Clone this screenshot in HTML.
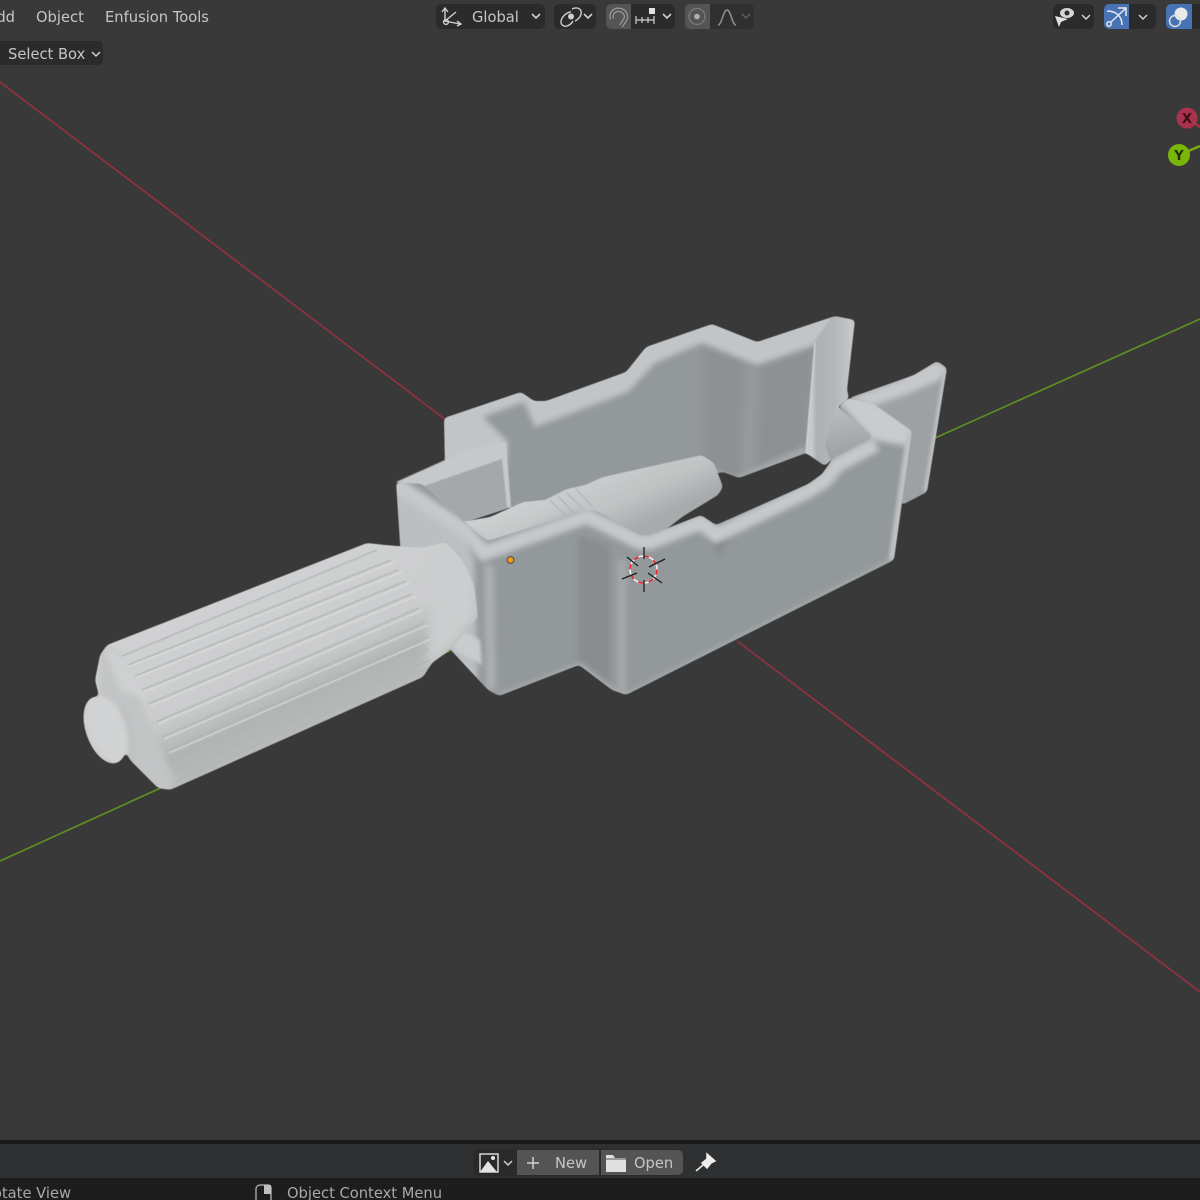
<!DOCTYPE html>
<html><head><meta charset="utf-8"><title>Viewport</title>
<style>html,body{margin:0;padding:0;background:#393939;width:1200px;height:1200px;overflow:hidden}svg{display:block;filter:blur(.35px)}text{font-family:"DejaVu Sans","Liberation Sans",sans-serif;font-size:14.7px;fill:#c6c6c6}</style></head><body>
<svg width="1200" height="1200" viewBox="0 0 1200 1200" xmlns="http://www.w3.org/2000/svg">
<defs>
<filter id="rd" filterUnits="userSpaceOnUse" x="0" y="0" width="1200" height="1200"><feGaussianBlur stdDeviation="2"/><feComponentTransfer><feFuncA type="linear" slope="4" intercept="-1.5"/></feComponentTransfer></filter>
<filter id="b1" filterUnits="userSpaceOnUse" x="0" y="0" width="1200" height="1200"><feGaussianBlur stdDeviation="1.5"/></filter>
<filter id="b3" filterUnits="userSpaceOnUse" x="0" y="0" width="1200" height="1200"><feGaussianBlur stdDeviation="3"/></filter>
<filter id="b5" filterUnits="userSpaceOnUse" x="0" y="0" width="1200" height="1200"><feGaussianBlur stdDeviation="5"/></filter>
<filter id="s" filterUnits="userSpaceOnUse" x="0" y="0" width="1200" height="1200"><feGaussianBlur stdDeviation="0.5"/></filter>
<mask id="cBack" maskUnits="userSpaceOnUse" x="0" y="0" width="1200" height="1200"><path filter="url(#rd)" fill="#fff" d="M444 418L521 392L534 401L546 401L626 372L646 347L712 324L757 342L835 316L855 320L847 390L849 398L838 407L833 458L825 466L806 453L739 478L723 472L510 520L505 462L470 458L445 470Z"/></mask>
<mask id="cFront" maskUnits="userSpaceOnUse" x="0" y="0" width="1200" height="1200"><path filter="url(#rd)" fill="#fff" d="M396 482L422 484L465 522L487 541L587 510L597 511L640 535L650 535L701 515L716 525L808 484L822 474L833 458L873 437L838 407L848 398L873 403L912 431L894 560L626 695L612 690L579 665L499 696L488 690L448 647L403 590Z"/></mask>
<mask id="cTab" maskUnits="userSpaceOnUse" x="0" y="0" width="1200" height="1200"><path filter="url(#rd)" fill="#fff" d="M849 398L914 375L937 361L947 368L927 492L902 505L880 470Z"/></mask>
<mask id="cNoz" maskUnits="userSpaceOnUse" x="0" y="0" width="1200" height="1200"><path filter="url(#rd)" fill="#fff" d="M455 523L490 517L523 502L545 500L567 489L585 485L603 477L702 455L714 463L723 487L718 495L682 517L640 550L480 570Z"/></mask>
<mask id="cKnob" maskUnits="userSpaceOnUse" x="0" y="0" width="1200" height="1200"><g filter="url(#rd)" fill="#fff"><path d="M367 543L385 545L423 548L445 542L462 560L474 585L478 617L450 650L432 663L423 677L170 790L158 788L130 760L100 700L95 680L100 655L107 645Z"/><ellipse cx="105" cy="730" rx="19" ry="35" transform="rotate(-20 105 730)"/></g></mask>
<linearGradient id="gk" gradientUnits="userSpaceOnUse" x1="235" y1="590" x2="300" y2="735"><stop offset="0" stop-color="#d0d1d2"/><stop offset=".55" stop-color="#cbcccd"/><stop offset=".8" stop-color="#b1b4b4"/><stop offset="1" stop-color="#b9bbbb"/></linearGradient>
<linearGradient id="gn" gradientUnits="userSpaceOnUse" x1="590" y1="470" x2="620" y2="535"><stop offset="0" stop-color="#cdcfd0"/><stop offset=".6" stop-color="#bfc1c2"/><stop offset="1" stop-color="#a8abac"/></linearGradient>
<linearGradient id="gp" gradientUnits="userSpaceOnUse" x1="812" y1="380" x2="850" y2="380"><stop offset="0" stop-color="#c6c8ca"/><stop offset=".12" stop-color="#aeb1b3"/><stop offset=".6" stop-color="#b4b7b9"/><stop offset="1" stop-color="#c4c6c8"/></linearGradient>
<linearGradient id="gw" gradientUnits="userSpaceOnUse" x1="845" y1="410" x2="850" y2="450"><stop offset="0" stop-color="#b8bbbd"/><stop offset="1" stop-color="#a0a4a6"/></linearGradient>
</defs>
<rect width="1200" height="1200" fill="#393939"/>
<g fill="none" stroke-width="1.7">
<path d="M0 82L446 420M737 641L1200 992" stroke="#90323f"/>
<path d="M0 861L165 786M435 658L455 648M935 438L1200 319" stroke="#608e22"/>
</g>
<!-- right tab -->
<g mask="url(#cTab)"><rect x="840" y="350" width="120" height="170" fill="#9da1a3"/>
<path d="M849 398L900 380L914 370L937 361L950 368L938 381L905 395L873 406Z" fill="#c6c8ca" filter="url(#b3)"/>
<path d="M946 370L926 492" stroke="#c0c3c4" stroke-width="5" fill="none" filter="url(#b1)"/></g>
<!-- back wall -->
<g mask="url(#cBack)"><rect x="440" y="310" width="420" height="240" fill="#93989a"/>
<path d="M703 340L703 470L735 482L806 450L815 345L760 365Z" fill="#8d9193" filter="url(#b5)"/>
<path d="M752 365L748 475" stroke="#999c9e" stroke-width="12" filter="url(#b5)" fill="none"/>
<path d="M703 470L735 482L806 450" stroke="#a8abad" stroke-width="7" fill="none" filter="url(#b3)"/>
<path d="M436 410L521 385L535 395L546 395L626 365L646 340L712 318L757 336L840 310L815 345L757 365L702 343L655 363L628 392L535 427L524 402L483 417L508 442L505 470L470 470L440 480Z" fill="#c2c5c7" filter="url(#b3)"/>
<path d="M815 343L806 453L825 468L835 458L840 407L852 398L860 315L835 312Z" fill="url(#gp)"/>
<path d="M815 343L806 453" stroke="#d0d2d3" stroke-width="1.5" filter="url(#s)"/>
</g>
<!-- left section rim and inner wall -->
<path d="M396 482L445 460L470 449L506 442L511 507L465 522L422 490Z" fill="#c6c8ca" filter="url(#s)"/>
<path d="M424 486L502 459L507 508L465 522Z" fill="#a4a8aa" filter="url(#s)"/>
<!-- far right inner -->
<path d="M836 405L882 440L833 468L825 445Z" fill="url(#gw)" filter="url(#s)"/>
<!-- nozzle -->
<g mask="url(#cNoz)"><rect x="450" y="450" width="280" height="130" fill="url(#gn)"/>
<path d="M460 530L495 548L575 512L640 545L725 500L730 570L470 570Z" fill="#aaadaf" filter="url(#b5)"/>
<g stroke="#aeb1b2" stroke-width="1.2" filter="url(#s)"><path d="M550 500L566 516M558 496L574 513M566 492L583 509M575 488L592 506"/></g>
</g>
<!-- front wall -->
<g mask="url(#cFront)"><rect x="390" y="395" width="530" height="310" fill="#93989a"/>
<path d="M390 480L403 595L448 650L478 690L474 560L465 530Z" fill="#bcbfc1" filter="url(#b3)"/>
<path d="M578 535L578 665L610 688L610 545Z" fill="#898d8f" filter="url(#b3)"/>
<path d="M622 560L622 690" stroke="#a6a9ab" stroke-width="9" filter="url(#b3)"/>
<path d="M489 565L491 690" stroke="#acafb1" stroke-width="10" filter="url(#b3)"/>
<path d="M705 538L720 555L730 538Z" fill="#878b8d" filter="url(#b3)"/>
<path d="M500 699L580 668L612 693L628 698L896 562" fill="none" stroke="#acafb1" stroke-width="9" filter="url(#b3)"/>
<path d="M396 484L465 530L484 553L587 516L640 542L650 542L701 522L716 535L808 491L825 480L837 465L876 444" fill="none" stroke="#c6c9cb" stroke-width="15" filter="url(#b3)"/>
<path d="M838 402L850 395L873 400L916 430L908 446L873 440Z" fill="#c9cbcd" filter="url(#b3)"/>
<path d="M910 433L892 560" stroke="#bfc2c4" stroke-width="7" filter="url(#b1)"/>
<path d="M450 625L480 640L482 665L455 650Z" fill="#c9cbcc" filter="url(#b1)"/>
</g>
<!-- knob -->
<g mask="url(#cKnob)"><rect x="75" y="530" width="410" height="270" fill="url(#gk)"/>
<path d="M100 655L107 645L122 656L175 782L160 795L125 760L98 690Z" fill="#c2c4c5" filter="url(#b3)"/>
<path d="M104 647L122 656L150 700L120 690Z" fill="#cfd0d1" filter="url(#b3)"/>
<ellipse cx="108" cy="730" rx="19" ry="35" transform="rotate(-20 108 730)" fill="#d1d2d3" filter="url(#b1)"/>
<path d="M122 705C130 725 134 745 130 762" stroke="#bcbebf" stroke-width="4" fill="none" filter="url(#b3)"/>
<path d="M425 548L445 542L474 585L478 617L450 650L425 670L430 610Z" fill="#cbcdce" filter="url(#b5)"/>
<g fill="none" stroke="#b1b4b5" stroke-width="1.4" filter="url(#s)">
<path d="M122 656L377 550M128 665L391 560M135 676L398 570M142 690L406 581M148 704L412 594M156 722L419 608"/>
<path d="M162 737L424 623M167 751L428 637M171 763L429 649M173 774L430 660M175 782L428 668"/>
</g>
<g fill="none" stroke="#dedfdf" stroke-width="1" filter="url(#s)">
<path d="M128 667L395 562M136 678L402 572M144 692L410 583M150 706L416 596M158 724L423 610M164 739L428 625M169 753L431 639"/>
</g></g>
<!-- origin and cursor -->
<circle cx="510.5" cy="560" r="3.4" fill="#f39a1c" stroke="#4a4a4a" stroke-width="1"/>
<circle cx="643.5" cy="569.5" r="13.5" fill="none" stroke="#f2f2f2" stroke-width="1.6"/>
<circle cx="643.5" cy="569.5" r="13.5" fill="none" stroke="#e8252b" stroke-width="1.6" stroke-dasharray="5.3 5.3"/>
<path d="M644 547V559M644 580V592M627 557L638 566M665 559L649 567M622 579L637 573M662 583L648 573" stroke="#1c1c1c" stroke-width="1.3" fill="none"/>
<!-- gizmo -->
<path d="M1187 118L1200 127" stroke="#a5334a" stroke-width="2.5"/><path d="M1179 155L1200 146" stroke="#78ae0e" stroke-width="2.5"/>
<circle cx="1187" cy="118" r="10.5" fill="#a9324c"/><circle cx="1179" cy="155" r="11" fill="#7ab50a"/>
<text x="1187" y="123" text-anchor="middle" style="font-size:13px;font-weight:bold;fill:#3a0f18">X</text>
<text x="1179" y="160" text-anchor="middle" style="font-size:13px;font-weight:bold;fill:#1f2e05">Y</text>
<!-- top bar -->
<text x="15" y="22" text-anchor="end">Add</text><text x="36" y="22">Object</text><text x="105" y="22">Enfusion Tools</text>
<rect x="-8" y="41" width="111" height="24" rx="5" fill="#2b2b2b"/><text x="8" y="59">Select Box</text>
<path d="M92 52L96 56L100 52" fill="none" stroke="#d0d0d0" stroke-width="1.5"/>
<rect x="436" y="4" width="109" height="25" rx="5" fill="#2b2b2b"/>
<rect x="554" y="4" width="42" height="25" rx="5" fill="#2b2b2b"/>
<rect x="606" y="4" width="69" height="25" rx="5" fill="#2b2b2b"/>
<path d="M611 4H631V29H611a5 5 0 0 1-5-5V9a5 5 0 0 1 5-5Z" fill="#545454"/>
<rect x="685" y="4" width="69" height="25" rx="5" fill="#303030"/>
<path d="M690 4H710V29H690a5 5 0 0 1-5-5V9a5 5 0 0 1 5-5Z" fill="#545454"/>
<g fill="none" stroke="#cfcfcf" stroke-width="1.4">
<path d="M445 9V21L460 24M445 21L456 12M442 12L445 8L448 12M457 21L461 24L457 26"/><circle cx="446" cy="22" r="2.4"/>
<path d="M532 14L536 18L540 14M584 14L588 18L592 14M663 14L667 18L671 14" stroke-width="1.6"/>
<path d="M571 12C567 12 561 17 561 22C561 25 564 27 567 26C570 25 572 23 573 21M575 21C579 19 582 15 581 11C580 8 576 7 572 9"/>
</g>
<circle cx="571" cy="16.500" r="3" fill="#cfcfcf"/>
<path d="M612 19C610 12 616 9 620 10C626 11 627 17 625 20L621 26" fill="none" stroke="#9a9a9a" stroke-width="4.500"/>
<path d="M612 19C610 12 616 9 620 10C626 11 627 17 625 20L621 26" fill="none" stroke="#545454" stroke-width="2"/>
<path d="M636 16V24M636 20H654M642 17V23M648 17V23M654 16V24" stroke="#cfcfcf" stroke-width="1.200" fill="none"/><rect x="649" y="8" width="6" height="6" fill="#e0e0e0"/>
<circle cx="697" cy="16.500" r="8" fill="none" stroke="#767676" stroke-width="1.500"/><circle cx="697" cy="16.500" r="2.800" fill="#b0b0b0"/>
<path d="M718 25c4 0 5-15 9-15s5 15 9 15" fill="none" stroke="#8e8e8e" stroke-width="1.500"/>
<path d="M742 14L746 18L750 14" fill="none" stroke="#5e5e5e" stroke-width="1.500"/>
<rect x="1053" y="4" width="41" height="25" rx="5" fill="#2b2b2b"/>
<path d="M1060 13a7 5 0 0 1 14 0a7 5 0 0 1-14 0Z" fill="#d6d6d6"/><circle cx="1067" cy="13" r="2.500" fill="#2b2b2b"/>
<path d="M1055 16L1068 19L1061 22L1059 27Z" fill="#e0e0e0"/>
<path d="M1082 15L1086 19L1090 15" fill="none" stroke="#d0d0d0" stroke-width="1.500"/>
<rect x="1104" y="4" width="52" height="25" rx="5" fill="#2b2b2b"/>
<path d="M1109 4H1129V29H1109a5 5 0 0 1-5-5V9a5 5 0 0 1 5-5Z" fill="#4772b3"/>
<g fill="none" stroke="#e8e8e8" stroke-width="1.500"><circle cx="1109" cy="24" r="2.200"/><path d="M1111 22L1125 9M1118 8H1126V16M1107 11C1117 11 1122 17 1122 25"/></g>
<path d="M1139 15L1143 19L1147 15" fill="none" stroke="#d0d0d0" stroke-width="1.500"/>
<rect x="1166" y="4" width="40" height="25" rx="5" fill="#2b2b2b"/>
<path d="M1171 4H1192V29H1171a5 5 0 0 1-5-5V9a5 5 0 0 1 5-5Z" fill="#4772b3"/>
<circle cx="1181" cy="14" r="6.500" fill="#eaeaea"/><circle cx="1175" cy="21" r="5.500" fill="none" stroke="#e0e0e0" stroke-width="1.500"/>
<text x="472" y="22">Global</text>
<!-- timeline header -->
<rect x="0" y="1140" width="1200" height="4" fill="#1a1a1a"/>
<rect x="0" y="1144" width="1200" height="35" fill="#2f3031"/>
<rect x="0" y="1178" width="1200" height="22" fill="#1d1d1d"/>
<rect x="473" y="1149" width="210" height="27" rx="5" fill="#2a2a2a"/>
<rect x="517" y="1150" width="82" height="25" fill="#545454"/>
<path d="M601 1150H678a5 5 0 0 1 5 5V1170a5 5 0 0 1-5 5H601Z" fill="#545454"/>
<rect x="480" y="1154" width="18" height="18" fill="none" stroke="#d6d6d6" stroke-width="1.500"/>
<path d="M480 1172L488 1161L497 1172Z" fill="#e4e4e4"/><circle cx="493" cy="1158" r="2" fill="#e4e4e4"/>
<path d="M504 1161L508 1165L512 1161" fill="none" stroke="#d0d0d0" stroke-width="1.500"/>
<path d="M533 1157V1169M527 1163H539" stroke="#d0d0d0" stroke-width="1.500"/>
<path d="M606 1155H613L615 1158H626V1172H606Z" fill="#e0e0e0"/><path d="M606 1159H626" stroke="#545454"/>
<text x="555" y="1168">New</text><text x="634" y="1168">Open</text>
<path d="M707 1154L715 1161L711 1163L707 1168L702 1163L707 1159Z M703 1165L696 1171" fill="#eeeeee" stroke="#eeeeee" stroke-width="1.500"/>
<text x="71" y="1198" text-anchor="end" style="fill:#a8a8a8">Rotate View</text>
<path d="M256 1200V1189a4 4 0 0 1 4-4H268a3 3 0 0 1 3 3V1200" fill="none" stroke="#a0a0a0" stroke-width="1.500"/><rect x="264" y="1185" width="7" height="9" fill="#c0c0c0"/>
<text x="287" y="1198" style="fill:#a8a8a8">Object Context Menu</text>
</svg>
</body></html>
